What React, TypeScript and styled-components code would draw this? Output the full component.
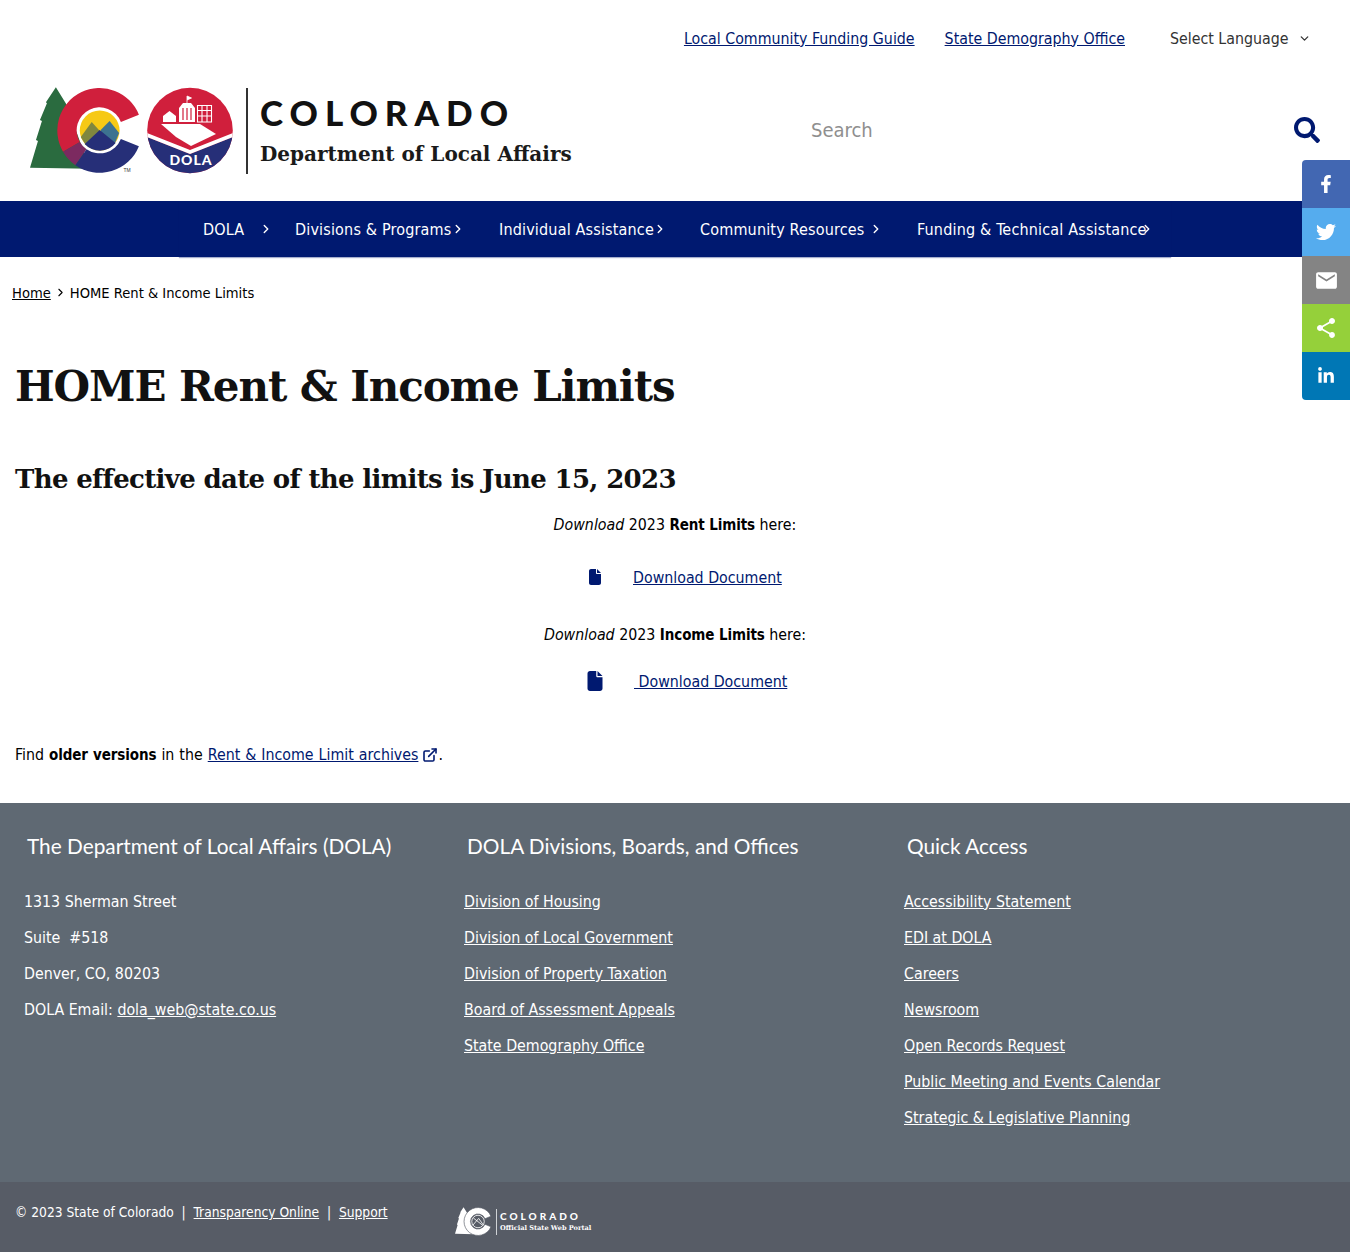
import React from "react";
import styled, { createGlobalStyle } from "styled-components";
import { FaFacebookF, FaTwitter, FaLinkedinIn, FaSearch } from "react-icons/fa";
import { FaFile } from "react-icons/fa6";
import { MdEmail, MdShare } from "react-icons/md";
import { ExternalLink, ChevronRight, ChevronDown } from "lucide-react";

const navy = "#001970";
const bodyFont = `"DejaVu Sans Condensed", "DejaVu Sans", sans-serif`;
const slabFont = `"DejaVu Serif", "Liberation Serif", serif`;

const GlobalStyle = createGlobalStyle`
  html, body { margin: 0; padding: 0; background: #fff; }
  body { font-family: ${bodyFont}; font-size: 15.8px; color: #000; }
  strong { font-size: 15px; letter-spacing: -0.1px; }
  * { box-sizing: border-box; }
`;

const TopBar = styled.div`
  height: 76px;
  display: flex;
  justify-content: flex-end;
  align-items: center;
  padding-right: 39px;
`;
const TopLink = styled.a`
  color: ${navy};
  text-decoration: underline;
  margin-right: 30px;
`;
const LangSelect = styled.div`
  width: 141px;
  margin-left: 15px;
  color: #333;
  display: flex;
  align-items: center;
  justify-content: space-between;
`;

const HeaderRow = styled.div`
  height: 125px;
  display: flex;
  align-items: center;
  padding: 11px 30px 27px;
  justify-content: space-between;
`;
const Brand = styled.div`
  display: flex;
  align-items: center;
  height: 87px;
`;
const LogoMarks = styled.div`
  display: flex;
  gap: 8px;
`;
const LogoDivider = styled.div`
  width: 2px;
  height: 86px;
  background: #333;
  margin: 0 12px 0 13px;
`;
const BrandText = styled.div`
  display: flex;
  flex-direction: column;
  gap: 9px;
  margin-top: -3px;
`;
const BrandName = styled.div`
  font-family: "Lato", sans-serif;
  font-weight: 900;
  font-size: 35px;
  line-height: 40px;
  letter-spacing: 7px;
  color: #111;
`;
const BrandDept = styled.div`
  font-family: ${slabFont};
  font-weight: 700;
  font-size: 20px;
  line-height: 26px;
  color: #1a1a1a;
`;
const SearchBox = styled.div`
  width: 509px;
  display: flex;
  align-items: center;
  justify-content: space-between;
  font-size: 20px;
  color: #8f8f8f;
  margin-top: -2px;
  & svg { color: ${navy}; font-size: 26px; }
`;

const NavBar = styled.nav`
  background: ${navy};
  height: 56px;
  display: flex;
  justify-content: center;
`;
const NavInner = styled.div`
  width: 992px;
  height: 56px;
  display: flex;
  align-items: center;
  box-shadow: 0 1px 1px rgba(0, 25, 112, 0.35);
`;
const NavItem = styled.a<{ $w: number; $gap: number }>`
  width: ${(p) => p.$w}px;
  padding-left: 24px;
  color: #fff;
  font-size: 16px;
  letter-spacing: 0.17px;
  text-decoration: none;
  display: flex;
  align-items: center;
  white-space: nowrap;
  & svg { flex: none; margin-left: ${(p) => p.$gap}px; }
`;

const ShareBar = styled.div`
  position: fixed;
  top: 160px;
  right: 0;
  width: 48px;
  border-radius: 4px 0 0 4px;
  overflow: hidden;
`;
const ShareBtn = styled.div<{ $bg: string; $size: number }>`
  height: 48px;
  background: ${(p) => p.$bg};
  color: #fff;
  display: flex;
  align-items: center;
  justify-content: center;
  font-size: ${(p) => p.$size}px;
`;

const Crumbs = styled.div`
  padding: 24px 12px 0;
  height: 47px;
  font-size: 14.6px;
  line-height: 22px;
  display: flex;
  align-items: center;
  gap: 3px;
`;
const CrumbLink = styled.a`
  color: #000;
  text-decoration: underline;
`;
const Main = styled.main`
  padding: 0 15px;
  height: 499px;
`;
const Title = styled.h1`
  font-family: ${slabFont};
  font-weight: 700;
  font-size: 42px;
  letter-spacing: -1.08px;
  line-height: 56px;
  margin: 0;
  padding-top: 55px;
  color: #111;
  height: 129px;
`;
const Subtitle = styled.h2`
  font-family: ${slabFont};
  font-weight: 700;
  font-size: 26px;
  letter-spacing: -0.66px;
  line-height: 36px;
  margin: 0;
  padding-top: 28px;
  height: 65px;
  color: #111;
`;
const Centered = styled.p<{ $top: number }>`
  text-align: center;
  margin: ${(p) => p.$top}px 0 0;
  line-height: 24px;
`;
const DocRow = styled.div<{ $top: number; $gap: number; $left: number }>`
  margin: ${(p) => p.$top}px 0 0 ${(p) => p.$left}px;
  display: flex;
  align-items: center;
  height: 24px;
  gap: ${(p) => p.$gap}px;
`;
const DocIcon = styled(FaFile)<{ $size: number }>`
  color: ${navy};
  font-size: ${(p) => p.$size}px;
  flex: none;
`;
const BodyLink = styled.a`
  color: ${navy};
  text-decoration: underline;
  white-space: pre;
`;
const Older = styled.p`
  margin: 50px 0 0;
  line-height: 24px;
  word-spacing: 0.5px;
  & svg { vertical-align: -3px; margin-left: 4px; color: ${navy}; }
`;

const Footer = styled.footer`
  background: #5f6973;
  height: 379px;
  padding: 23px 0 0 24px;
  display: grid;
  grid-template-columns: 440px 440px 1fr;
  color: #fff;
`;
const FooterHead = styled.h3`
  font-family: "Lato", sans-serif;
  font-weight: 400;
  font-size: 20.8px;
  line-height: 40px;
  margin: 0 0 18px 3px;
`;
const FooterLine = styled.div`
  height: 36px;
  line-height: 36px;
  white-space: pre;
`;
const FooterLink = styled.a`
  color: #fff;
  text-decoration: underline;
`;
const BottomBar = styled.div`
  background: #575c66;
  height: 70px;
  display: flex;
  color: #fff;
  padding: 19px 0 0 15px;
  font-size: 13.7px;
`;
const Copy = styled.div`
  width: 440px;
  line-height: 22px;
  white-space: pre;
`;
const PortalLogo = styled.div`
  display: flex;
  align-items: center;
  height: 29px;
  margin-top: 6px;
`;
const PortalDivider = styled.div`
  width: 1px;
  height: 26px;
  background: #cfd2d6;
  margin: 0 3px 0 5px;
`;
const PortalText = styled.div`
  display: flex;
  flex-direction: column;
  gap: 2px;
`;
const PortalName = styled.div`
  font-family: "Lato", sans-serif;
  font-weight: 900;
  font-size: 10px;
  line-height: 11px;
  letter-spacing: 3px;
`;
const PortalSub = styled.div`
  font-family: ${slabFont};
  font-weight: 700;
  font-size: 6.6px;
  line-height: 8px;
  white-space: nowrap;
`;

const treePoints = "56,87 67,105 90,169 30,168 38,141 36,140 42,121 40,120 47,103 46,102";

const StateMark = () => (
  <svg width="109" height="87" viewBox="30 87 109.500 87">
    <polygon points={treePoints} fill="#2a6b3f" />
    <path d="M139.400 114.600 A42.500 42.500 0 1 0 63.200 151.750 L80.100 142 A23 23 0 1 1 121.300 121.900 Z" fill="#d01f3c" />
    <path d="M63.200 151.750 A42.500 42.500 0 0 0 75.600 165.300 L86.800 149.300 A23 23 0 0 1 80.100 142 Z" fill="#7c2a60" />
    <path d="M75.600 165.300 A42.500 42.500 0 0 0 139.400 146.400 L121.300 139.100 A23 23 0 0 1 86.800 149.300 Z" fill="#262f78" />
    <circle cx="100" cy="130.500" r="20" fill="#f6c915" />
    <path d="M81 137 L92 122 L102 133 L98 148 L86 145 Z" fill="#80873f" />
    <path d="M101 130 L110 121 L119.500 133 L115 144 L104 146 Z" fill="#3d7290" />
    <path d="M85 144 L100 130 L116 143 A20 20 0 0 1 85 144 Z" fill="#262f78" />
    <text x="124" y="172" fontSize="5" fontFamily="Liberation Sans, sans-serif" fill="#333">TM</text>
  </svg>
);

const DolaSeal = () => (
  <svg width="86" height="87" viewBox="147 87 86 87">
    <defs>
      <clipPath id="seal">
        <circle cx="190" cy="130.500" r="42.800" />
      </clipPath>
    </defs>
    <g clipPath="url(#seal)">
      <rect x="147" y="87" width="86" height="87" fill="#d01f3c" />
      <path d="M147 137 L190 154 L233 137 V174 H147 Z" fill="#262f78" />
      <path d="M147 133 L190 150 L233 133 V137 L190 154 L147 137 Z" fill="#fff" />
    </g>
    <path d="M161 124 L200 124 L216 134 L191 146 L176 137 Z" fill="#fff" />
    <path d="M163 116 L169.500 111 L176 116 V122 H163 Z" fill="#fff" />
    <path d="M179 108 L183 103 H191 L195 108 V122 H179 Z" fill="#fff" />
    <path d="M183 108 V120 M187 108 V120 M191 108 V120" stroke="#d01f3c" strokeWidth="1.200" />
    <path d="M187 103 V96 L191.500 98 L187 100" fill="#fff" stroke="#fff" strokeWidth="0.800" />
    <path d="M197.500 105.500 H211.500 V122 H197.500 Z M197 110.500 H212 M197 116 H212 M202 105 V122 M207 105 V122" fill="none" stroke="#fff" strokeWidth="1.100" />
    <text
      x="191"
      y="164.500"
      textAnchor="middle"
      fontSize="14"
      fontWeight="900"
      letterSpacing="1"
      fontFamily="Lato, sans-serif"
      fill="#fff"
    >
      DOLA
    </text>
  </svg>
);

const PortalMark = () => (
  <svg width="36" height="29" viewBox="30 87 109.500 87">
    <polygon points={treePoints} fill="#fff" />
    <path d="M139.400 114.600 A42.500 42.500 0 1 0 139.400 146.400 L121.300 139.100 A23 23 0 1 1 121.300 121.900 Z" fill="#fff" stroke="#575c66" strokeWidth="2" />
    <circle cx="100" cy="130.500" r="19" fill="none" stroke="#fff" strokeWidth="2.500" />
    <path d="M84 142 L102 121 L117 142 M86 120 L114 142" fill="none" stroke="#fff" strokeWidth="2.500" />
  </svg>
);

const navItems = [
  { label: "DOLA", w: 92, gap: 15 },
  { label: "Divisions & Programs", w: 204, gap: 0 },
  { label: "Individual Assistance", w: 201, gap: -1 },
  { label: "Community Resources", w: 217, gap: 4 },
  { label: "Funding & Technical Assistance", w: 278, gap: -7 },
];

const divisions = [
  "Division of Housing",
  "Division of Local Government",
  "Division of Property Taxation",
  "Board of Assessment Appeals",
  "State Demography Office",
];
const quickLinks = [
  "Accessibility Statement",
  "EDI at DOLA",
  "Careers",
  "Newsroom",
  "Open Records Request",
  "Public Meeting and Events Calendar",
  "Strategic & Legislative Planning",
];

export default function App() {
  return (
    <>
      <GlobalStyle />
      <TopBar>
        <TopLink href="#">Local Community Funding Guide</TopLink>
        <TopLink href="#">State Demography Office</TopLink>
        <LangSelect>
          Select Language
          <ChevronDown size={13} strokeWidth={2.4} />
        </LangSelect>
      </TopBar>
      <HeaderRow>
        <Brand>
          <LogoMarks>
            <StateMark />
            <DolaSeal />
          </LogoMarks>
          <LogoDivider />
          <BrandText>
            <BrandName>COLORADO</BrandName>
            <BrandDept>Department of Local Affairs</BrandDept>
          </BrandText>
        </Brand>
        <SearchBox>
          Search
          <FaSearch />
        </SearchBox>
      </HeaderRow>
      <NavBar>
        <NavInner>
          {navItems.map((n) => (
            <NavItem key={n.label} href="#" $w={n.w} $gap={n.gap}>
              {n.label}
              <ChevronRight size={14} strokeWidth={2.4} />
            </NavItem>
          ))}
        </NavInner>
      </NavBar>
      <ShareBar>
        <ShareBtn $bg="#4267b2" $size={18}><FaFacebookF /></ShareBtn>
        <ShareBtn $bg="#55acee" $size={20}><FaTwitter /></ShareBtn>
        <ShareBtn $bg="#848484" $size={25}><MdEmail /></ShareBtn>
        <ShareBtn $bg="#95d03a" $size={24}><MdShare /></ShareBtn>
        <ShareBtn $bg="#0077b5" $size={18}><FaLinkedinIn /></ShareBtn>
      </ShareBar>
      <Crumbs>
        <CrumbLink href="#">Home</CrumbLink>
        <ChevronRight size={13} strokeWidth={2} />
        <span>HOME Rent &amp; Income Limits</span>
      </Crumbs>
      <Main>
        <Title>HOME Rent &amp; Income Limits</Title>
        <Subtitle>The effective date of the limits is June 15, 2023</Subtitle>
        <Centered $top={15}>
          <em>Download</em> 2023 <strong>Rent Limits</strong> here:
        </Centered>
        <DocRow $top={28} $gap={30.5} $left={571.5}>
          <DocIcon $size={16} />
          <BodyLink href="#">Download Document</BodyLink>
        </DocRow>
        <Centered $top={34}>
          <em>Download</em> 2023 <strong>Income Limits</strong> here:
        </Centered>
        <DocRow $top={22} $gap={29.5} $left={569.5}>
          <DocIcon $size={20} />
          <BodyLink href="#"> Download Document</BodyLink>
        </DocRow>
        <Older>
          Find <strong>older versions</strong> in the <BodyLink href="#">Rent &amp; Income Limit archives</BodyLink>
          <ExternalLink size={16} strokeWidth={2.4} />.
        </Older>
      </Main>
      <Footer>
        <div>
          <FooterHead>The Department of Local Affairs (DOLA)</FooterHead>
          <FooterLine>1313 Sherman Street</FooterLine>
          <FooterLine>Suite  #518</FooterLine>
          <FooterLine>Denver, CO, 80203</FooterLine>
          <FooterLine>DOLA Email: <FooterLink href="#">dola_web@state.co.us</FooterLink></FooterLine>
        </div>
        <div>
          <FooterHead>DOLA Divisions, Boards, and Offices</FooterHead>
          {divisions.map((d) => (
            <FooterLine key={d}><FooterLink href="#">{d}</FooterLink></FooterLine>
          ))}
        </div>
        <div>
          <FooterHead>Quick Access</FooterHead>
          {quickLinks.map((d) => (
            <FooterLine key={d}><FooterLink href="#">{d}</FooterLink></FooterLine>
          ))}
        </div>
      </Footer>
      <BottomBar>
        <Copy>
          © 2023 State of Colorado  |  <FooterLink href="#">Transparency Online</FooterLink>  |  <FooterLink href="#">Support</FooterLink>
        </Copy>
        <PortalLogo>
          <PortalMark />
          <PortalDivider />
          <PortalText>
            <PortalName>COLORADO</PortalName>
            <PortalSub>Official State Web Portal</PortalSub>
          </PortalText>
        </PortalLogo>
      </BottomBar>
    </>
  );
}
